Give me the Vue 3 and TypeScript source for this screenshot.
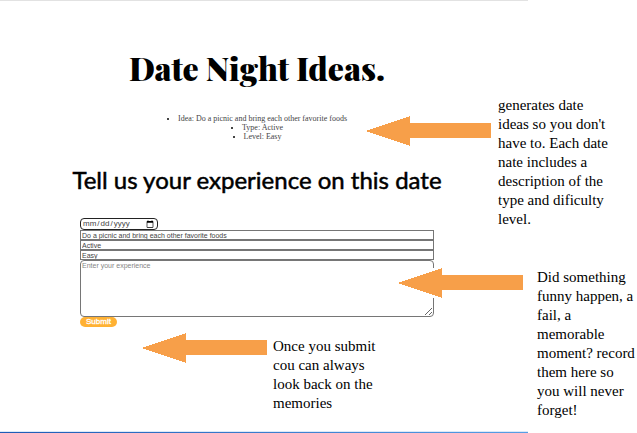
<script setup lang="ts">
import { ref } from 'vue'

interface Idea {
  idea: string
  type: string
  level: string
}

interface Note {
  id: string
  text: string
}

const current: Idea = {
  idea: 'Do a picnic and bring each other favorite foods',
  type: 'Active',
  level: 'Easy',
}

const entry = ref({ date: '', ...current, experience: '' })

const notes: Note[] = [
  {
    id: 'generate',
    text: "generates date\nideas so you don't\nhave to. Each date\nnate includes a\ndescription of the\ntype and dificulty\nlevel.",
  },
  {
    id: 'record',
    text: 'Did something\nfunny happen, a\nfail, a\nmemorable\nmoment? record\nthem here so\nyou will never\nforget!',
  },
  {
    id: 'submit',
    text: 'Once you submit\ncou can always\nlook back on the\nmemories',
  },
]
</script>

<template>
  <div class="board">
    <main class="page">
      <h1>Date Night Ideas.</h1>
      <ul class="idea">
        <li>Idea: {{ current.idea }}</li>
        <li>Type: {{ current.type }}</li>
        <li>Level: {{ current.level }}</li>
      </ul>
      <h2>Tell us your experience on this date</h2>
      <form class="entry" @submit.prevent>
        <input v-model="entry.date" class="date" type="date" aria-label="Date" />
        <input v-model="entry.idea" class="field" type="text" aria-label="Idea" />
        <input v-model="entry.type" class="field" type="text" aria-label="Type" />
        <input v-model="entry.level" class="field" type="text" aria-label="Level" />
        <textarea v-model="entry.experience" placeholder="Enter your experience" aria-label="Experience"></textarea>
        <button type="submit">Submit</button>
      </form>
    </main>
    <aside v-for="note in notes" :key="note.id" class="note" :class="note.id">
      <svg class="arrow" width="125" height="30" viewBox="0 0 125 30" aria-hidden="true">
        <path d="M0 15 44 0V7H125V22H44V30Z" fill="#f79f49" shape-rendering="crispEdges" />
      </svg>
      <p>{{ note.text }}</p>
    </aside>
  </div>
</template>

<style>
body {
  margin: 0;
  background: #fff;
}
</style>

<style scoped>
.board {
  position: relative;
  box-sizing: border-box;
  min-height: 100vh;
  padding-right: 109px;
  display: flex;
  overflow: hidden;
}

.page {
  flex: 1;
  display: flex;
  flex-direction: column;
  align-items: center;
  padding: 48px 14px 0 0;
  border-bottom: 1px solid;
  border-image: linear-gradient(90deg, #1d5bb5, #569fe6) 1;
  border-image-width: 0 0 1px;
  box-shadow: inset 0 1px #e2e2e2, inset 0 -1px #dce9f7;
}

h1,
h2,
.idea {
  margin: 0;
  text-align: center;
}

h1 {
  font: 900 32px/40px "Playfair Display", "Liberation Serif", serif;
  color: #000;
}

.idea {
  margin-top: 26px;
  padding: 0;
  list-style: square inside;
  font: 8px/9px "Liberation Serif", serif;
  color: #444;
}

h2 {
  margin-top: 23px;
  font: 400 24px/32px Lato, sans-serif;
  color: #000;
  -webkit-text-stroke: 0.5px #000;
}

.entry {
  width: 354px;
  margin-top: 22px;
  display: flex;
  flex-direction: column;
  align-items: flex-start;
}

.entry input,
.entry textarea {
  box-sizing: border-box;
  margin: 0;
  border: 1px solid #767676;
  background: #fff;
  font: 7px/8px "Liberation Sans", sans-serif;
  color: #444;
  outline: none;
}

.entry .date {
  width: 78px;
  height: 12px;
  padding: 0 1px;
  border-color: #222;
  border-radius: 4px;
  font-size: 8px;
}

.entry .field {
  width: 100%;
  height: 10px;
  padding: 0 1px;
}

.entry textarea {
  width: 100%;
  height: 57px;
  padding: 1px;
  border-radius: 4px;
  resize: both;
}

.entry textarea::placeholder {
  color: #858585;
}

.entry button {
  height: 10px;
  padding: 0 6px;
  border: 0;
  border-radius: 5px;
  background: #ffb133;
  color: #fff;
  font: 8px/10px "Liberation Sans", sans-serif;
  -webkit-text-stroke: 0.3px #fff;
}

.note {
  position: absolute;
  display: flex;
  align-items: flex-start;
}

.note p {
  margin: 0;
  white-space: pre;
  font: 15px/19px "Liberation Serif", serif;
  color: #000;
}

.arrow {
  flex: none;
  background: #fff;
}

.generate {
  left: 366px;
  top: 96px;
  gap: 7px;
}

.generate .arrow {
  margin-top: 20px;
}

.record {
  left: 398px;
  top: 268px;
  gap: 14px;
}

.submit {
  left: 142px;
  top: 333px;
  gap: 6px;
}

.submit p {
  margin-top: 4px;
}
</style>
